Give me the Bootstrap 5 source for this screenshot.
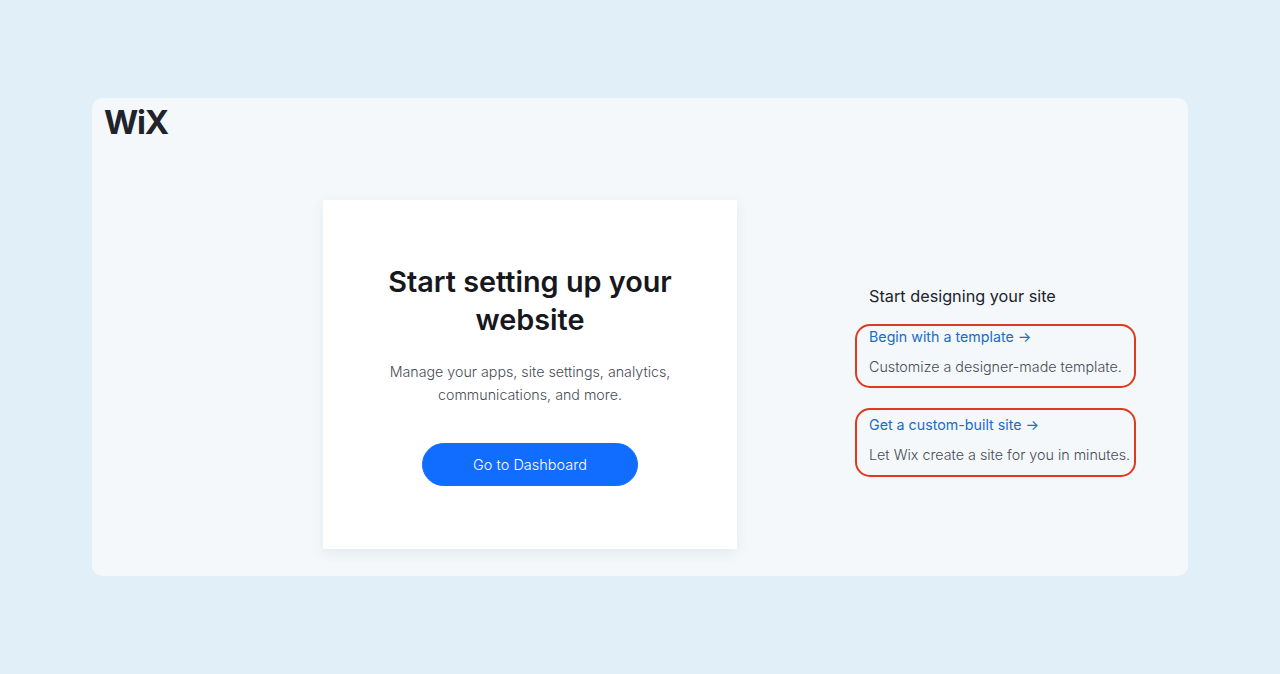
<!DOCTYPE html>
<html lang="en">

<head>
    <meta charset="UTF-8">
    <meta name="viewport" content="width=device-width, initial-scale=1.0">
    <title>Wix Dashboard</title>
    <link href="https://cdn.jsdelivr.net/npm/bootstrap@5.3.3/dist/css/bootstrap.min.css" rel="stylesheet">
    <style>
        body {
            background: #e0eff8;
            font-family: Inter, "Liberation Sans", sans-serif;
            height: 674px;
            overflow: hidden;
        }
        .panel-box {
            background: #f4f8fb;
            border-radius: 10px;
            margin: 98px 92px 0;
            height: 478px;
            padding: 0 0 0 12px;
        }
        .wix-logo {
            color: #20232b;
            font-size: 33px;
            font-weight: 700;
            line-height: 48px;
            letter-spacing: -1.2px;
            height: 102px;
        }
        .setup-card {
            width: 414px;
            height: 349px;
            margin-left: 219px;
            padding-top: 63px;
            background: #fff;
            box-shadow: 0 4px 12px rgba(30, 60, 90, .08);
        }
        .setup-card h1 {
            color: #16181d;
            font-size: 28.8px;
            font-weight: 600;
            line-height: 38px;
            margin-bottom: 21px;
        }
        .setup-card p {
            color: #484b53;
            font-size: 14.25px;
            font-weight: 300;
            line-height: 23px;
            margin-bottom: 37px;
        }
        .dash-btn {
            width: 216px;
            height: 43px;
            background: #116dff;
            border-color: #116dff;
            color: #fff;
            font-size: 14.5px;
            font-weight: 300;
            line-height: 29px;
        }
        .side-col {
            margin-left: 118px;
            padding-top: 85px;
        }
        .side-col h2 {
            color: #20232b;
            font-size: 16.25px;
            font-weight: 400;
            line-height: 22px;
            margin: 0 0 17px 14px;
        }
        .ring-box {
            width: 281px;
            border: 2.5px solid #e0391c;
            border-radius: 15px;
            padding-left: 12px;
            white-space: nowrap;
        }
        .ring-box a {
            color: #1a6cc4;
            font-size: 14.25px;
            line-height: 22px;
            text-decoration: none;
            display: block;
        }
        .ring-box p {
            color: #484b53;
            font-size: 14.3px;
            font-weight: 300;
            line-height: 22px;
            margin: 8px 0 0;
        }
        .ring-one { height: 64px; margin-bottom: 20px; }
        .ring-two { height: 69px; padding-top: 4px; }
    </style>
</head>

<body>
    <div class="panel-box">
        <div class="wix-logo">WiX</div>
        <div class="d-flex">
            <div class="setup-card text-center">
                <h1>Start setting up your<br>website</h1>
                <p>Manage your apps, site settings, analytics,<br>communications, and more.</p>
                <button class="btn rounded-pill dash-btn">Go to Dashboard</button>
            </div>
            <div class="side-col">
                <h2>Start designing your site</h2>
                <div class="ring-box ring-one">
                    <a href="#">Begin with a template →</a>
                    <p>Customize a designer-made template.</p>
                </div>
                <div class="ring-box ring-two">
                    <a href="#">Get a custom-built site →</a>
                    <p>Let Wix create a site for you in minutes.</p>
                </div>
            </div>
        </div>
    </div>
    <script src="https://cdn.jsdelivr.net/npm/bootstrap@5.3.3/dist/js/bootstrap.bundle.min.js"></script>
</body>

</html>
